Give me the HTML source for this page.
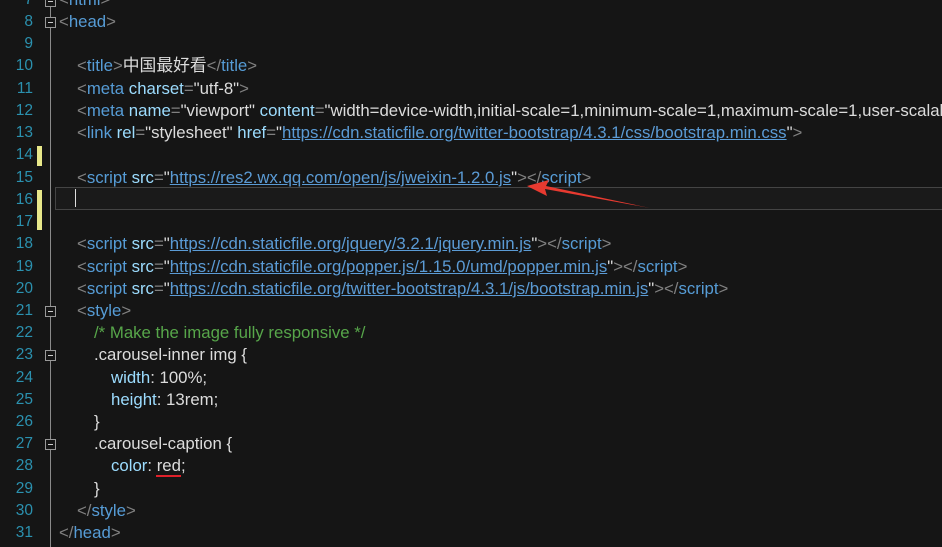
<!DOCTYPE html>
<html><head><meta charset="utf-8"><style>
body{margin:0;width:942px;height:547px;background:#151515;overflow:hidden;position:relative;font-family:"Liberation Sans","Noto Sans CJK SC",sans-serif;font-size:16.8px}
.l{position:absolute;left:0;height:22px;line-height:22px;white-space:nowrap}
.n{position:absolute;width:33px;text-align:right;color:#2b91af;font-size:15.5px}
.c{position:absolute;color:#dcdcdc}
.b{color:#808080}.t{color:#569cd6}.a{color:#9cdcfe}.v{color:#dcdcdc}
.u{color:#5b9bd5;text-decoration:underline}
.g{color:#57a64a}.p{color:#9cdcfe}
.fold{position:absolute;left:45px;width:9px;height:9px;border:1px solid #999;background:#151515}
.fold:after{content:"";position:absolute;left:2px;top:4px;width:5px;height:1px;background:#ccc}
.ym{position:absolute;left:37px;width:5px;background:#e8e88a}
</style></head><body>
<div style="position:absolute;left:50px;top:0;width:1px;height:547px;background:#8a8a8a"></div>
<div style="position:absolute;left:55px;top:187px;width:887px;height:21px;border:1px solid #444;border-right:none;background:#1a1a1a"></div>
<div style="position:absolute;left:75px;top:189px;width:1px;height:18px;background:#ddd"></div>
<div class="ym" style="top:146px;height:20px"></div>
<div class="ym" style="top:190px;height:40px"></div>

<div class="l" style="top:-11px"><span class="n">7</span><span class="c" style="left:59px"><span class="b">&lt;</span><span class="t">html</span><span class="b">&gt;</span></span></div>
<div class="fold" style="top:-4px"></div>
<div class="l" style="top:11px"><span class="n">8</span><span class="c" style="left:59px"><span class="b">&lt;</span><span class="t">head</span><span class="b">&gt;</span></span></div>
<div class="fold" style="top:17px"></div>
<div class="l" style="top:33px"><span class="n">9</span></div>
<div class="l" style="top:55px"><span class="n">10</span><span class="c" style="left:77px"><span class="b">&lt;</span><span class="t">title</span><span class="b">&gt;</span>中国最好看<span class="b">&lt;/</span><span class="t">title</span><span class="b">&gt;</span></span></div>
<div class="l" style="top:78px"><span class="n">11</span><span class="c" style="left:77px"><span class="b">&lt;</span><span class="t">meta</span> <span class="a">charset</span><span class="b">=</span>"utf-8"<span class="b">&gt;</span></span></div>
<div class="l" style="top:100px"><span class="n">12</span><span class="c" style="left:77px"><span class="b">&lt;</span><span class="t">meta</span> <span class="a">name</span><span class="b">=</span>"viewport" <span class="a">content</span><span class="b">=</span>"width=device-width,initial-scale=1,minimum-scale=1,maximum-scale=1,user-scalab</span></div>
<div class="l" style="top:122px"><span class="n">13</span><span class="c" style="left:77px"><span class="b">&lt;</span><span class="t">link</span> <span class="a">rel</span><span class="b">=</span>"stylesheet" <span class="a">href</span><span class="b">=</span>"<span class="u">https://cdn.staticfile.org/twitter-bootstrap/4.3.1/css/bootstrap.min.css</span>"<span class="b">&gt;</span></span></div>
<div class="l" style="top:144px"><span class="n">14</span></div>
<div class="l" style="top:167px"><span class="n">15</span><span class="c" style="left:77px"><span class="b">&lt;</span><span class="t">script</span> <span class="a">src</span><span class="b">=</span>"<span class="u">https://res2.wx.qq.com/open/js/jweixin-1.2.0.js</span>"<span class="b">&gt;&lt;/</span><span class="t">script</span><span class="b">&gt;</span></span></div>
<div class="l" style="top:189px"><span class="n">16</span></div>
<div class="l" style="top:211px"><span class="n">17</span></div>
<div class="l" style="top:233px"><span class="n">18</span><span class="c" style="left:77px"><span class="b">&lt;</span><span class="t">script</span> <span class="a">src</span><span class="b">=</span>"<span class="u">https://cdn.staticfile.org/jquery/3.2.1/jquery.min.js</span>"<span class="b">&gt;&lt;/</span><span class="t">script</span><span class="b">&gt;</span></span></div>
<div class="l" style="top:256px"><span class="n">19</span><span class="c" style="left:77px"><span class="b">&lt;</span><span class="t">script</span> <span class="a">src</span><span class="b">=</span>"<span class="u">https://cdn.staticfile.org/popper.js/1.15.0/umd/popper.min.js</span>"<span class="b">&gt;&lt;/</span><span class="t">script</span><span class="b">&gt;</span></span></div>
<div class="l" style="top:278px"><span class="n">20</span><span class="c" style="left:77px"><span class="b">&lt;</span><span class="t">script</span> <span class="a">src</span><span class="b">=</span>"<span class="u">https://cdn.staticfile.org/twitter-bootstrap/4.3.1/js/bootstrap.min.js</span>"<span class="b">&gt;&lt;/</span><span class="t">script</span><span class="b">&gt;</span></span></div>
<div class="l" style="top:300px"><span class="n">21</span><span class="c" style="left:77px"><span class="b">&lt;</span><span class="t">style</span><span class="b">&gt;</span></span></div>
<div class="fold" style="top:306px"></div>
<div class="l" style="top:322px"><span class="n">22</span><span class="c g" style="left:94px">/* Make the image fully responsive */</span></div>
<div class="l" style="top:344px"><span class="n">23</span><span class="c" style="left:94px">.carousel-inner img {</span></div>
<div class="fold" style="top:350px"></div>
<div class="l" style="top:367px"><span class="n">24</span><span class="c" style="left:111px"><span class="p">width</span>: 100%;</span></div>
<div class="l" style="top:389px"><span class="n">25</span><span class="c" style="left:111px"><span class="p">height</span>: 13rem;</span></div>
<div class="l" style="top:411px"><span class="n">26</span><span class="c" style="left:94px">}</span></div>
<div class="l" style="top:433px"><span class="n">27</span><span class="c" style="left:94px">.carousel-caption {</span></div>
<div class="fold" style="top:439px"></div>
<div class="l" style="top:455px"><span class="n">28</span><span class="c" style="left:111px"><span class="p">color</span>: red;</span></div>
<div style="position:absolute;left:156px;top:475px;width:25px;height:2px;background:#e0202a"></div>
<div class="l" style="top:478px"><span class="n">29</span><span class="c" style="left:94px">}</span></div>
<div class="l" style="top:500px"><span class="n">30</span><span class="c" style="left:77px"><span class="b">&lt;/</span><span class="t">style</span><span class="b">&gt;</span></span></div>
<div class="l" style="top:522px"><span class="n">31</span><span class="c" style="left:59px"><span class="b">&lt;/</span><span class="t">head</span><span class="b">&gt;</span></span></div>

<svg style="position:absolute;left:0;top:0" width="942" height="547">
<polygon points="650,208 545,189 547,196 527,186 549,180 546,186" fill="#e83a30"/>
</svg>
</body></html>
